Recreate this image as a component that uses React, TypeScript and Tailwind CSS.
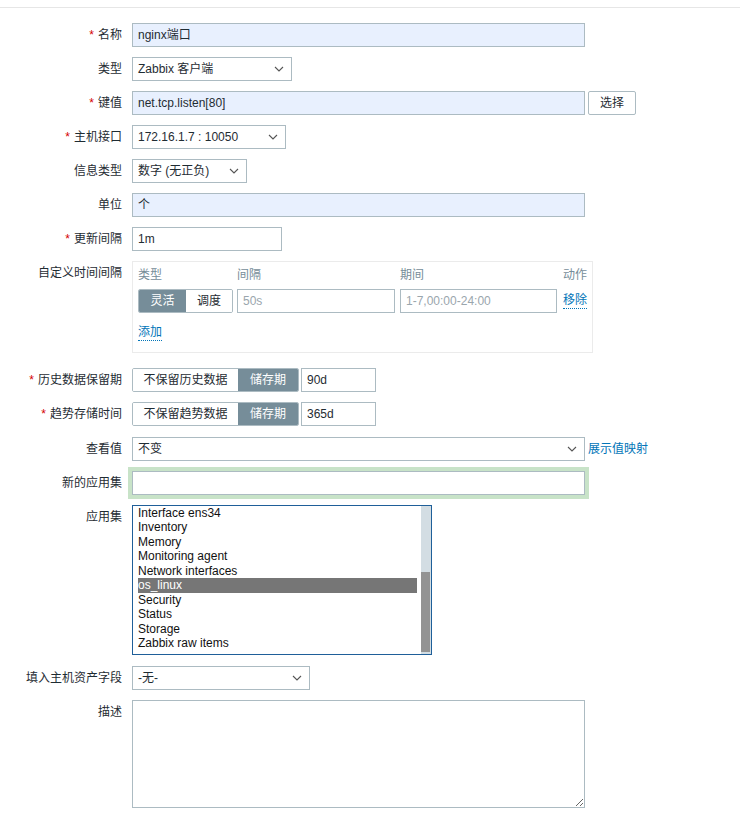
import React from "react";

const FONT = { fontFamily: '"Liberation Sans", Arial, "Noto Sans CJK SC", sans-serif' };

function Label({ text, req }: { text: string; req?: boolean }) {
  return (
    <div className="w-[122px] shrink-0 h-[24px] leading-[24px] text-right whitespace-nowrap">
      {req && <span className="text-[#d40000] mr-[4px]">*</span>}
      {text}
    </div>
  );
}

function Row({ label, req, mt, children }: { label: string; req?: boolean; mt?: string; children: React.ReactNode }) {
  return (
    <div className={"flex items-start " + (mt || "")}>
      <Label text={label} req={req} />
      <div className="ml-[10px]">{children}</div>
    </div>
  );
}

function Chevron() {
  return (
    <svg width="10" height="6" viewBox="0 0 10 6" className="shrink-0">
      <polyline points="1,1 5,5 9,1" fill="none" stroke="#555" strokeWidth="1.1" />
    </svg>
  );
}

function Select({ w, text }: { w: string; text: string }) {
  return (
    <div className={"h-[24px] border border-[#acbbc2] bg-white flex items-center justify-between pl-[5px] pr-[7px] " + w}>
      <span className="whitespace-nowrap leading-[22px]">{text}</span>
      <Chevron />
    </div>
  );
}

function Input({ w, value, bg, color }: { w: string; value: string; bg?: string; color?: string }) {
  return (
    <div className={"h-[24px] border border-[#acbbc2] px-[5px] leading-[22px] whitespace-nowrap " + w + " " + (bg || "bg-white") + " " + (color || "")}>
      {value}
    </div>
  );
}

function Segmented({ items, active, widths }: { items: string[]; active: number; widths: string[] }) {
  return (
    <div className="flex h-[24px] border border-[#acbbc2] rounded-[2px] overflow-hidden">
      {items.map((it, i) => (
        <div
          key={it}
          className={
            "h-full leading-[22px] text-center whitespace-nowrap " +
            widths[i] +
            (i === active ? " bg-[#768d99] text-white" : " bg-white text-[#1f2c33]")
          }
        >
          {it}
        </div>
      ))}
    </div>
  );
}

const apps = [
  "Interface ens34",
  "Inventory",
  "Memory",
  "Monitoring agent",
  "Network interfaces",
  "os_linux",
  "Security",
  "Status",
  "Storage",
  "Zabbix raw items",
];

export default function App() {
  return (
    <div className="w-[740px] h-[816px] bg-white text-[12px] text-[#1f2c33] overflow-hidden" style={FONT}>
      <div className="h-[8px] border-b border-[#e6e6e6]" />
      <div className="pt-[15px] flex flex-col">
        <Row label="名称" req>
          <Input w="w-[453px]" value="nginx端口" bg="bg-[#e8f0fe]" />
        </Row>
        <Row label="类型" mt="mt-[10px]">
          <Select w="w-[160px]" text="Zabbix 客户端" />
        </Row>
        <Row label="键值" req mt="mt-[10px]">
          <div className="flex items-start">
            <Input w="w-[453px]" value="net.tcp.listen[80]" bg="bg-[#e8f0fe]" />
            <div className="ml-[3px] h-[24px] w-[48px] border border-[#acbbc2] rounded-[2px] bg-white text-center leading-[22px]">
              选择
            </div>
          </div>
        </Row>
        <Row label="主机接口" req mt="mt-[10px]">
          <Select w="w-[154px]" text="172.16.1.7 : 10050" />
        </Row>
        <Row label="信息类型" mt="mt-[10px]">
          <Select w="w-[115px]" text="数字 (无正负)" />
        </Row>
        <Row label="单位" mt="mt-[10px]">
          <Input w="w-[453px]" value="个" bg="bg-[#e8f0fe]" />
        </Row>
        <Row label="更新间隔" req mt="mt-[10px]">
          <Input w="w-[150px]" value="1m" />
        </Row>
        <Row label="自定义时间间隔" mt="mt-[10px]">
          <div className="w-[461px] h-[92px] border border-[#ebebeb] pl-[5px] pt-[4px]">
            <div className="flex h-[18px] leading-[18px] text-[#768d99]">
              <div className="w-[99px]">类型</div>
              <div className="w-[163px]">间隔</div>
              <div className="w-[163px]">期间</div>
              <div>动作</div>
            </div>
            <div className="flex items-start mt-[5px]">
              <Segmented items={["灵活", "调度"]} active={0} widths={["w-[47px]", "w-[46px]"]} />
              <div className="ml-[4px]">
                <Input w="w-[158px]" value="50s" color="text-[#9aa6ad]" />
              </div>
              <div className="ml-[5px]">
                <Input w="w-[157px]" value="1-7,00:00-24:00" color="text-[#9aa6ad]" />
              </div>
              <div className="ml-[6px] h-[24px] flex items-center">
                <span className="text-[#0275b8] border-b border-dotted border-[#0275b8] leading-[15px]">移除</span>
              </div>
            </div>
            <div className="mt-[11px] h-[18px] flex items-center">
              <span className="text-[#0275b8] border-b border-dotted border-[#0275b8] leading-[15px]">添加</span>
            </div>
          </div>
        </Row>
        <Row label="历史数据保留期" req mt="mt-[15px]">
          <div className="flex items-start">
            <Segmented items={["不保留历史数据", "储存期"]} active={1} widths={["w-[105px]", "w-[60px]"]} />
            <div className="ml-[2px]">
              <Input w="w-[75px]" value="90d" />
            </div>
          </div>
        </Row>
        <Row label="趋势存储时间" req mt="mt-[10px]">
          <div className="flex items-start">
            <Segmented items={["不保留趋势数据", "储存期"]} active={1} widths={["w-[105px]", "w-[60px]"]} />
            <div className="ml-[2px]">
              <Input w="w-[75px]" value="365d" />
            </div>
          </div>
        </Row>
        <Row label="查看值" mt="mt-[11px]">
          <div className="flex items-center">
            <Select w="w-[453px]" text="不变" />
            <span className="ml-[3px] text-[#0275b8]">展示值映射</span>
          </div>
        </Row>
        <Row label="新的应用集" mt="mt-[10px]">
          <div className="w-[453px] h-[24px] border border-[#acbbc2] bg-white shadow-[0_0_0_4px_#c8e3c8]" />
        </Row>
        <Row label="应用集" mt="mt-[10px]">
          <div className="w-[300px] h-[150px] border border-[#1f5f99] bg-white flex">
            <div className="flex-1 pl-[5px] pr-[4px] pt-0">
              {apps.map((a) => (
                <div
                  key={a}
                  className={
                    "h-[14.45px] leading-[14.45px] whitespace-nowrap " +
                    (a === "os_linux" ? "bg-[#767676] text-white" : "text-[#111]")
                  }
                >
                  {a}
                </div>
              ))}
            </div>
            <div className="w-[10px] shrink-0 bg-[#d3dde3] flex flex-col justify-end pb-[2px] pr-[1px]">
              <div className="h-[80px] bg-[#939393]" />
            </div>
          </div>
        </Row>
        <Row label="填入主机资产字段" mt="mt-[11px]">
          <Select w="w-[178px]" text="-无-" />
        </Row>
        <Row label="描述" mt="mt-[10px]">
          <textarea
            readOnly
            className="block w-[453px] h-[108px] border border-[#acbbc2] bg-white outline-none"
          />
        </Row>
      </div>
    </div>
  );
}
